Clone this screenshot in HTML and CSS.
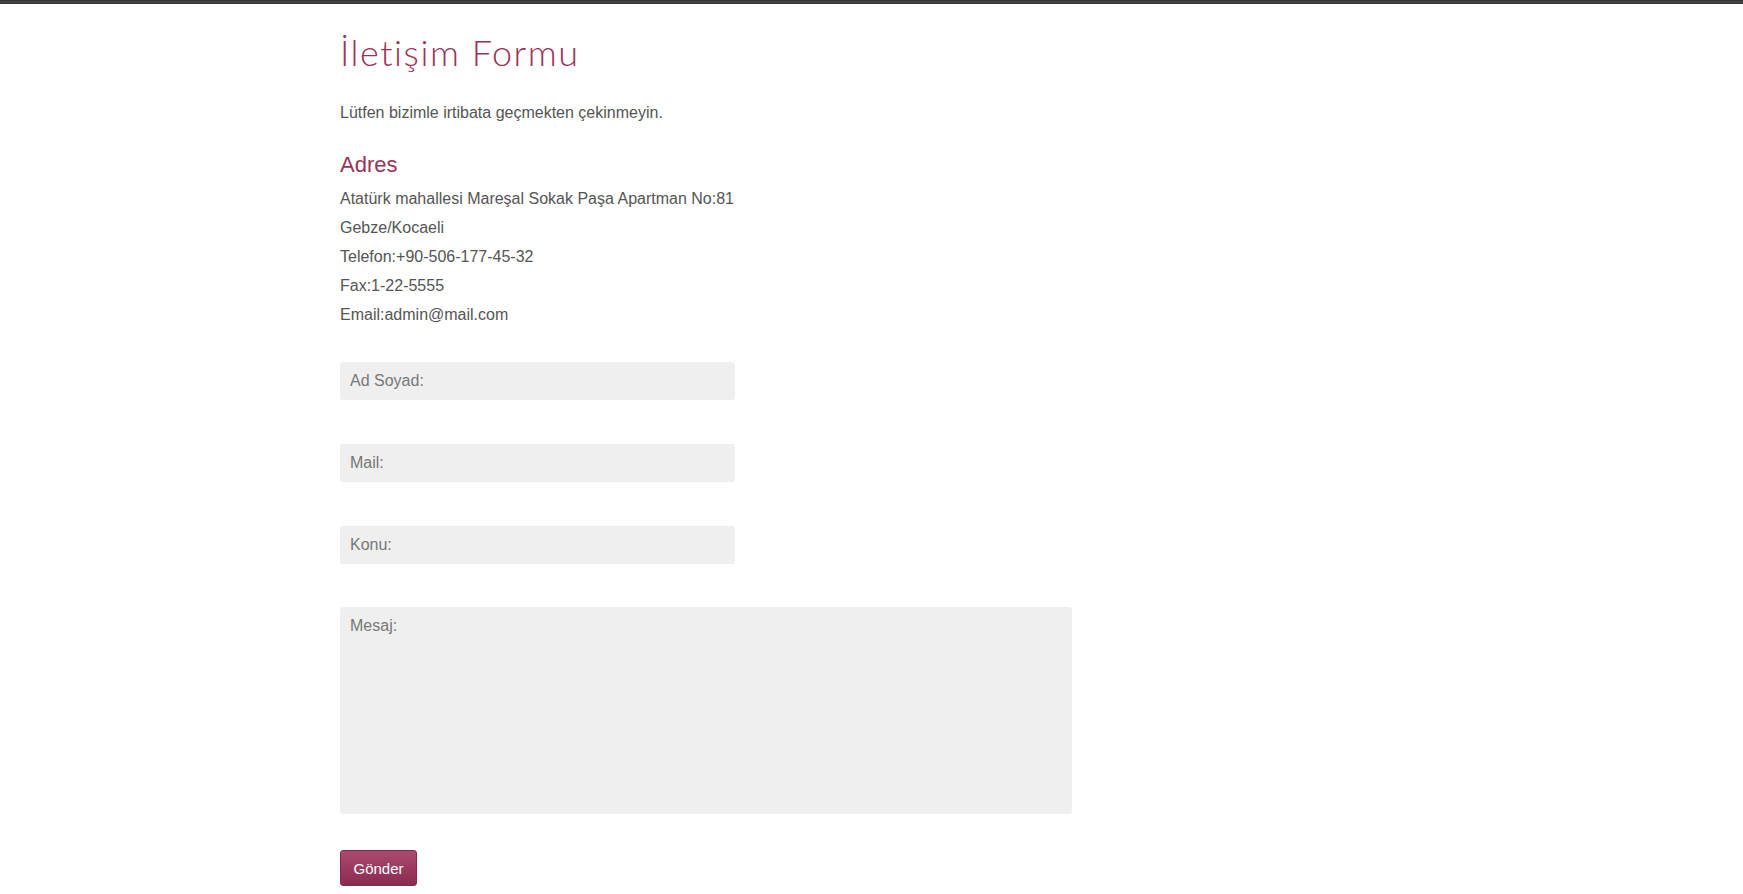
FILE: index.html
```html
<!DOCTYPE html>
<html lang="tr">
<head>
<meta charset="utf-8">
<title>İletişim Formu</title>
<link rel="stylesheet" href="styles.css">
</head>
<body>
<div class="topbar"></div>
<main class="container">
  <h1 class="title">İletişim Formu</h1>
  <p class="lead">Lütfen bizimle irtibata geçmekten çekinmeyin.</p>
  <h3 class="subtitle">Adres</h3>
  <div class="address">
    <div>Atatürk mahallesi Mareşal Sokak Paşa Apartman No:81</div>
    <div>Gebze/Kocaeli</div>
    <div>Telefon:+90-506-177-45-32</div>
    <div>Fax:1-22-5555</div>
    <div>Email:admin@mail.com</div>
  </div>
  <form class="form">
    <input class="field" type="text" placeholder="Ad Soyad:">
    <input class="field" type="text" placeholder="Mail:">
    <input class="field" type="text" placeholder="Konu:">
    <textarea class="field message" placeholder="Mesaj:"></textarea>
    <button class="btn" type="button">Gönder</button>
  </form>
</main>
</body>
</html>
```
FILE: styles.css
```css
html, body {
  margin: 0;
  padding: 0;
  background: #fff;
}
body {
  font-family: "Liberation Sans", Arial, sans-serif;
  color: #555;
  font-size: 16px;
}
.topbar {
  height: 4px;
  background: linear-gradient(#2e2e2e, #4a4a4a 50%, #2e2e2e);
}
.container {
  width: 1063px;
  margin: 0 auto;
  padding-bottom: 6px;
}
.title {
  margin: 0;
  padding-top: 26px;
  font-family: Lato, sans-serif;
  font-weight: 300;
  font-size: 36px;
  line-height: 44px;
  letter-spacing: 1.5px;
  font-variant-ligatures: none;
  color: #9a3358;
}
.lead {
  margin: 29px 0 0;
  line-height: 20px;
}
.subtitle {
  margin: 29px 0 0;
  font-weight: normal;
  font-size: 22px;
  line-height: 26px;
  color: #9a3358;
}
.address {
  margin-top: 6px;
  line-height: 29px;
}
.form {
  display: flex;
  flex-direction: column;
  align-items: flex-start;
  gap: 44px;
  margin-top: 33px;
}
.field {
  box-sizing: border-box;
  width: 395px;
  height: 38px;
  border: none;
  border-radius: 3px;
  background: #efefef;
  padding: 0 10px;
  font-family: "Liberation Sans", Arial, sans-serif;
  font-size: 16px;
  color: #555;
  outline: none;
}
.field::placeholder {
  color: #777;
}
.message {
  width: 732px;
  height: 207px;
  padding: 10px;
  resize: none;
  margin-top: -1px;
}
.btn {
  margin-top: -8px;
  width: 77px;
  height: 36px;
  border: 1px solid #85284a;
  border-radius: 3px;
  background: linear-gradient(#a94a6e, #8b2b4f);
  color: #fff;
  font-family: "Liberation Sans", Arial, sans-serif;
  font-size: 15px;
  padding: 0;
}
```
